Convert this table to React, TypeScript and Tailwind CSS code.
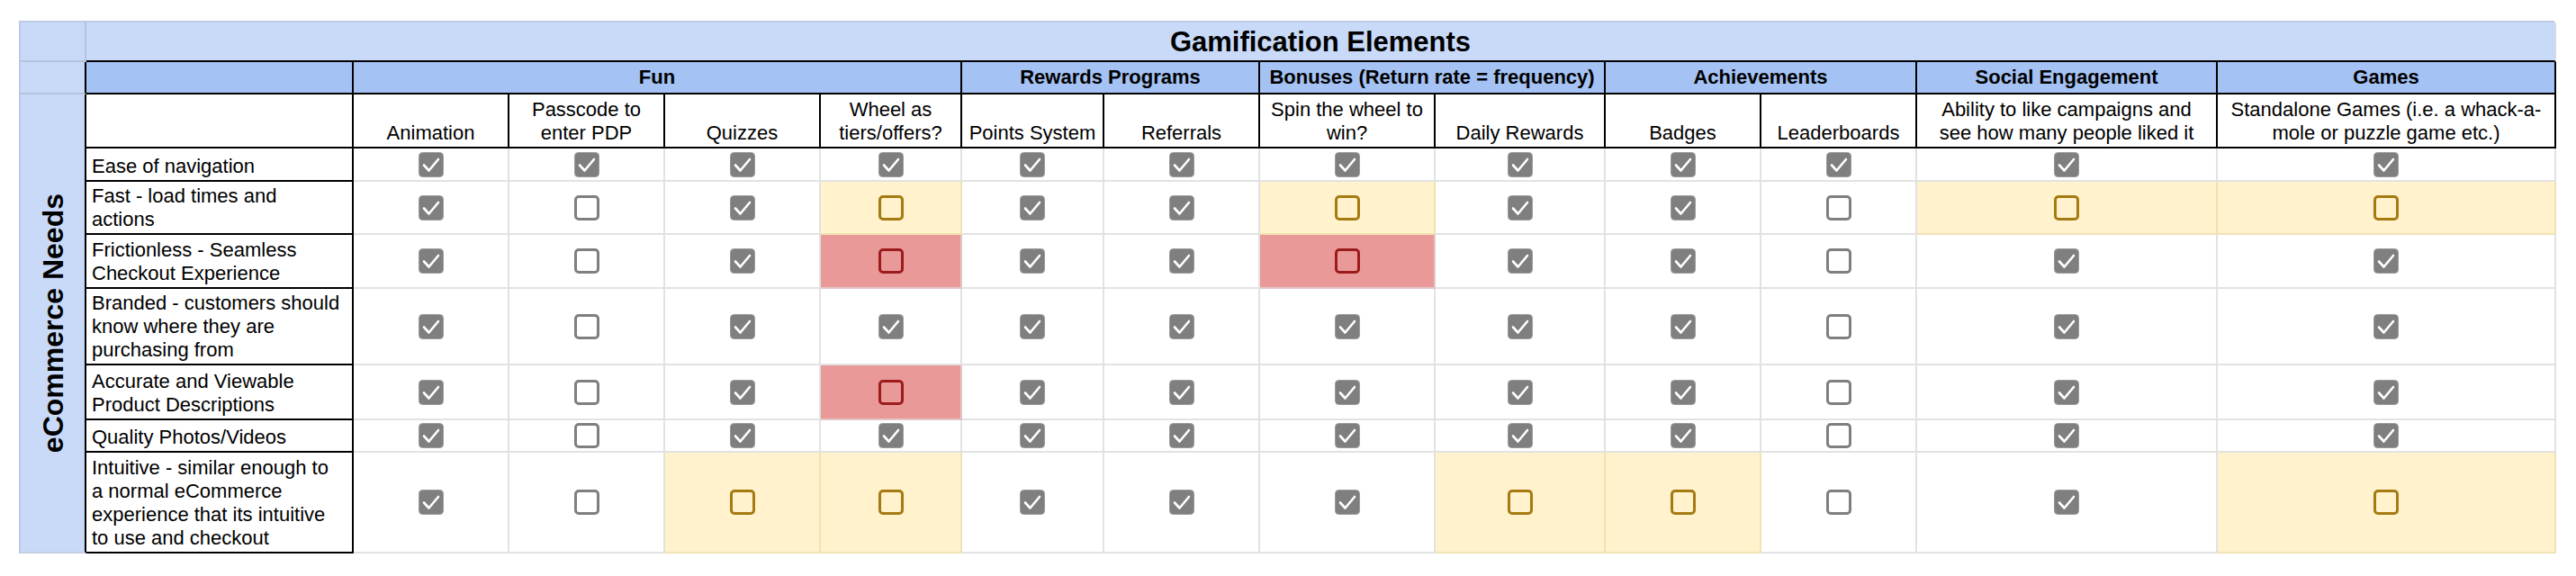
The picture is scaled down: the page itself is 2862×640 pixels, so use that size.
import React from 'react';

// c = checked, u = unchecked, Y = unchecked on yellow, R = unchecked on red
const ROWS: { label: string[]; marks: string }[] = [
  { label: ['Ease of navigation'], marks: 'cccccccccccc' },
  { label: ['Fast - load times and', 'actions'], marks: 'cucYccYccuYY' },
  { label: ['Frictionless - Seamless', 'Checkout Experience'], marks: 'cucRccRccucc' },
  { label: ['Branded - customers should', 'know where they are', 'purchasing from'], marks: 'cucccccccucc' },
  { label: ['Accurate and Viewable', 'Product Descriptions'], marks: 'cucRcccccucc' },
  { label: ['Quality Photos/Videos'], marks: 'cucccccccucc' },
  {
    label: ['Intuitive - similar enough to', 'a normal eCommerce', 'experience that its intuitive', 'to use and checkout'],
    marks: 'cuYYcccYYucY',
  },
];

const SUBHEADS: string[][] = [
  ['Animation'],
  ['Passcode to', 'enter PDP'],
  ['Quizzes'],
  ['Wheel as', 'tiers/offers?'],
  ['Points System'],
  ['Referrals'],
  ['Spin the wheel to', 'win?'],
  ['Daily Rewards'],
  ['Badges'],
  ['Leaderboards'],
  ['Ability to like campaigns and', 'see how many people liked it'],
  ['Standalone Games (i.e. a whack-a-', 'mole or puzzle game etc.)'],
];

const GROUPS: { name: string; span: string }[] = [
  { name: 'Fun', span: 'col-span-4' },
  { name: 'Rewards Programs', span: 'col-span-2' },
  { name: 'Bonuses (Return rate = frequency)', span: 'col-span-2' },
  { name: 'Achievements', span: 'col-span-2' },
  { name: 'Social Engagement', span: 'col-span-1' },
  { name: 'Games', span: 'col-span-1' },
];

function Box({ kind }: { kind: string }) {
  if (kind === 'c') {
    return (
      <svg width="28" height="28" viewBox="0 0 28 28">
        <rect x="0.5" y="0.5" width="27" height="27" rx="4" fill="#7f7f7f" stroke="#9b9b9b" />
        <path
          d="M6 14.5 L11.5 20.5 L22 8"
          fill="none"
          stroke="#fff"
          strokeWidth="2.6"
          strokeLinecap="round"
          strokeLinejoin="round"
        />
      </svg>
    );
  }
  const stroke = kind === 'Y' ? '#a57a12' : kind === 'R' ? '#9c1c1c' : '#7f7f7f';
  return (
    <svg width="28" height="28" viewBox="0 0 28 28">
      <rect x="1.5" y="1.5" width="25" height="25" rx="3.5" fill="none" stroke={stroke} strokeWidth="3" />
    </svg>
  );
}

function Lines({ lines }: { lines: string[] }) {
  return (
    <>
      {lines.map((l, i) => (
        <div key={i}>{l}</div>
      ))}
    </>
  );
}

export default function App() {
  return (
    <div className="min-h-[640px] bg-white pt-[23px] pl-[21px] font-['Liberation_Sans',Arial,sans-serif] text-[22px] leading-[26px] text-black">
      <div className="grid w-[2817px] grid-cols-[73px_297px_173px_173px_173px_157px_158px_173px_195px_189px_173px_173px_334px_376px] grid-rows-[44px_36px_60px_37px_59px_60px_85px_61px_36px_112px] border-t-2 border-l-2 border-[#bccbe4]">
        {/* title row */}
        <div className="bg-[#c9daf8] border-r-2 border-b-2 border-[#b3c3df]" />
        <div className="col-span-13 flex items-center justify-center bg-[#c9daf8] border-b-2 border-r-2 border-b-black border-r-[#d3dae6] pt-[2px] text-[31px] font-bold">
          Gamification Elements
        </div>

        {/* category row */}
        <div className="bg-[#c9daf8] border-r-2 border-b-2 border-r-black border-b-[#b3c3df]" />
        <div className="bg-[#a4c2f4] border-r-2 border-b-2 border-black" />
        {GROUPS.map((g) => (
          <div
            key={g.name}
            className={`${g.span} flex items-center justify-center bg-[#a4c2f4] border-r-2 border-b-2 border-black font-bold whitespace-nowrap`}
          >
            {g.name}
          </div>
        ))}

        {/* side label, spans subheader and body rows */}
        <div className="row-span-8 flex items-center justify-center bg-[#c9daf8] border-r-2 border-b-2 border-r-black border-b-[#c4cfe2]">
          <span className="[writing-mode:vertical-rl] rotate-180 text-[32px] font-bold leading-none">eCommerce Needs</span>
        </div>

        {/* subheader row */}
        <div className="bg-white border-r-2 border-b-2 border-black" />
        {SUBHEADS.map((s, i) => (
          <div
            key={i}
            className="flex flex-col items-center justify-end bg-white border-r-2 border-b-2 border-black px-[4px] pb-[2px] text-center whitespace-nowrap"
          >
            <Lines lines={s} />
          </div>
        ))}

        {/* body */}
        {ROWS.map((r, ri) => (
          <React.Fragment key={ri}>
            <div className="flex flex-col justify-end bg-white border-r-2 border-b-2 border-black pl-[6px] pb-[2px] whitespace-nowrap">
              <Lines lines={r.label} />
            </div>
            {r.marks.split('').map((m, ci) => (
              <div
                key={ci}
                className={`flex items-center justify-center border-r-2 border-b-2 ${
                  m === 'Y'
                    ? 'bg-[#fff2cc] border-[#f1e2b4]'
                    : m === 'R'
                    ? 'bg-[#ea9999] border-[#e3c6c6]'
                    : 'bg-white border-[#e2e2e2]'
                }`}
              >
                <Box kind={m} />
              </div>
            ))}
          </React.Fragment>
        ))}
      </div>
    </div>
  );
}
